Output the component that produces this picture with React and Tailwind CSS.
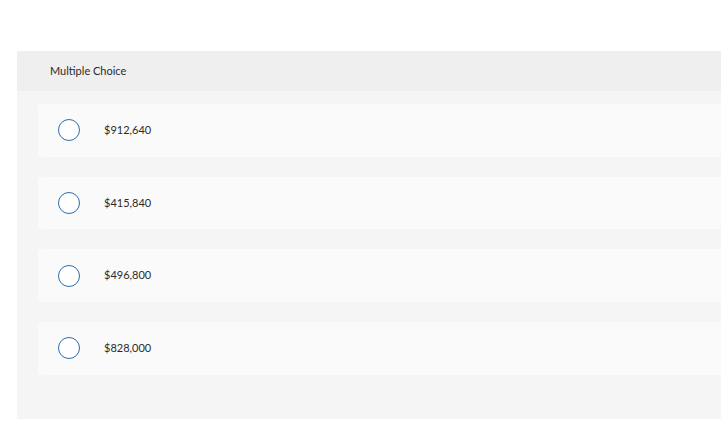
import React from 'react';

// --- DATA PILIHAN ---
const options = ['$912,640', '$415,840', '$496,800', '$828,000'];

function App() {
  return (
    <div className="min-h-screen bg-white overflow-hidden pt-[51px] pl-[17px] font-['Lato','Open_Sans',sans-serif] text-[#2a2a2a]">
      <div className="w-[760px] bg-[#f5f5f5] pb-[44px]">
        {/* HEADER */}
        <div className="h-[40px] bg-[#efefef] flex items-center pl-[33px] text-[11px]">
          Multiple Choice
        </div>

        {/* OPSI */}
        <div className="pl-[21px] pt-[13px] flex flex-col gap-[20px]">
          {options.map((opt) => (
            <div key={opt} className="h-[52.7px] bg-[#fafafa] rounded-[3px] flex items-center pl-[20px]">
              <span className="w-[22px] h-[22px] rounded-full border-[1.5px] border-[#2f6da6] bg-white" />
              <span className="ml-[24px] text-[11px]">{opt}</span>
            </div>
          ))}
        </div>
      </div>
    </div>
  );
}

export default App;
